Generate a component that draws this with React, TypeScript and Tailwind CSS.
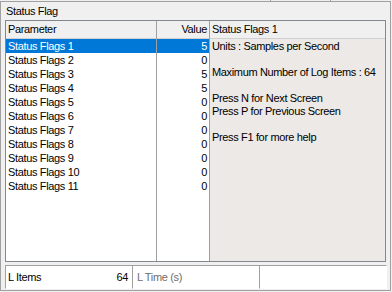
import React from "react";

const rows = [
  { name: "Status Flags 1", value: 5 },
  { name: "Status Flags 2", value: 0 },
  { name: "Status Flags 3", value: 5 },
  { name: "Status Flags 4", value: 5 },
  { name: "Status Flags 5", value: 0 },
  { name: "Status Flags 6", value: 0 },
  { name: "Status Flags 7", value: 0 },
  { name: "Status Flags 8", value: 0 },
  { name: "Status Flags 9", value: 0 },
  { name: "Status Flags 10", value: 0 },
  { name: "Status Flags 11", value: 0 },
];

const selected = 0;

export default function App() {
  return (
    <div
      className="w-[392px] h-[292px] bg-[#f0f0f0] text-[11px] leading-[13px] tracking-[-0.35px] whitespace-nowrap text-black overflow-hidden"
      style={{ fontFamily: '"Liberation Sans", Arial, sans-serif' }}
    >
      {/* stub of the frame above */}
      <div className="h-px flex">
        <div className="w-[270px]" />
        <div className="w-px bg-[#a0a0a0]" />
        <div className="w-[59px]" />
        <div className="w-px bg-[#a0a0a0]" />
      </div>

      <div className="w-[391px] h-[290px] border border-[#a0a0a0] flex flex-col">
        <div className="h-[18px] pl-[5px] flex items-center">Status Flag</div>

        {/* table */}
        <div className="ml-[4px] w-[381px] h-[242px] border border-[#828790] flex bg-white">
          {/* parameter column */}
          <div className="w-[151px] flex flex-col border-r border-[#a0a0a0]">
            <div className="h-[18px] bg-[#f0f0f0] border-b border-[#d0d0d0] flex items-center pl-[2px]">
              Parameter
            </div>
            {rows.map((r, i) => (
              <div
                key={r.name}
                className={`h-[14px] flex items-center pl-[2px] ${i === selected ? "bg-[#0078d7] text-white" : ""}`}
              >
                {r.name}
              </div>
            ))}
          </div>

          {/* value column */}
          <div className="w-[53px] flex flex-col border-r border-[#a0a0a0]">
            <div className="h-[18px] bg-[#f0f0f0] border-b border-[#d0d0d0] flex items-center justify-end pr-[2px]">
              Value
            </div>
            {rows.map((r, i) => (
              <div
                key={r.name}
                className={`h-[14px] flex items-center justify-end pr-[2px] ${i === selected ? "bg-[#0078d7] text-white" : ""}`}
              >
                {r.value}
              </div>
            ))}
          </div>

          {/* info panel */}
          <div className="flex-1 flex flex-col bg-[#ece9e6]">
            <div className="h-[18px] bg-[#f0f0f0] border-b border-[#d0d0d0] flex items-center pl-[2px]">
              Status Flags 1
            </div>
            <div className="pl-[2px] pt-[1px] flex flex-col">
              <div className="h-[13px]">Units : Samples per Second</div>
              <div className="h-[13px]" />
              <div className="h-[13px]">Maximum Number of Log Items : 64</div>
              <div className="h-[13px]" />
              <div className="h-[13px]">Press N for Next Screen</div>
              <div className="h-[13px]">Press P for Previous Screen</div>
              <div className="h-[13px]" />
              <div className="h-[13px]">Press F1 for more help</div>
            </div>
          </div>
        </div>

        {/* status bar */}
        <div className="mt-[3px] ml-[4px] h-[24px] flex">
          <div className="w-[127px] border-t border-l border-[#a0a0a0] border-b border-b-white flex items-center justify-between pl-[2px] pr-[4px] bg-white">
            <span>L Items</span>
            <span>64</span>
          </div>
          <div className="w-[127px] border-t border-l border-[#a0a0a0] border-b border-b-white flex items-center pl-[4px] bg-white text-[#6d6d6d]">
            L Time (s)
          </div>
          <div className="w-[128px] border-t border-l border-[#a0a0a0] border-b border-b-white border-r border-r-white bg-white" />
        </div>
      </div>
    </div>
  );
}
